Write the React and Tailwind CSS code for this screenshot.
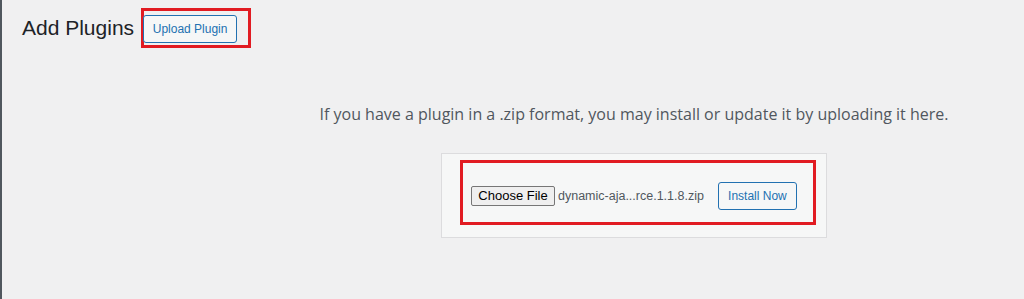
import React from "react";

const FONT = { fontFamily: '"Liberation Sans", Arial, sans-serif' };

function WpButton({ children, className = "" }) {
  return (
    <span
      className={`flex items-center justify-center h-[28px] border border-[#2271b1] rounded-[3px] bg-[#f6f7f7] text-[12px] text-[#2271b1] ${className}`}
    >
      {children}
    </span>
  );
}

export default function App() {
  return (
    <div style={FONT} className="w-[1024px] h-[299px] bg-[#f0f0f1] border-l-2 border-[#50575e] overflow-hidden">
      {/* Title row */}
      <div className="flex items-center gap-[8px] pl-[20px] pt-[8px]">
        <h1 className="text-[21px] leading-[28px] text-[#1d2327]">Add Plugins</h1>
        <div className="border-[3px] border-[#e11b22] pt-[4px] pb-[2px] pr-[11px] -ml-[1px]">
          <WpButton className="w-[94px] -ml-[1px]">Upload Plugin</WpButton>
        </div>
      </div>

      {/* Upload area */}
      <div className="flex flex-col items-center pl-[242px]">
        <p className="mt-[56px] text-[16px] leading-[21px] text-[#50575e] font-['Open_Sans',sans-serif] whitespace-nowrap">
          If you have a plugin in a .zip format, you may install or update it by uploading it here.
        </p>
        <div className="mt-[28px] w-[386px] h-[85px] border border-[#dcdcde] bg-[#f6f7f7] pl-[18px] pr-[10px] pt-[6px]">
          <div className="h-[65px] border-[3px] border-[#e11b22] flex items-center pl-[8px] pt-[7px]">
            <span className="flex items-center justify-center w-[84px] h-[20px] border border-[#767676] rounded-[2px] bg-[#efefef] text-[13px] text-black">
              Choose File
            </span>
            <span className="ml-[3px] text-[12.5px] text-[#50575e]">dynamic-aja...rce.1.1.8.zip</span>
            <WpButton className="w-[79px] ml-[14px]">Install Now</WpButton>
          </div>
        </div>
      </div>
    </div>
  );
}
